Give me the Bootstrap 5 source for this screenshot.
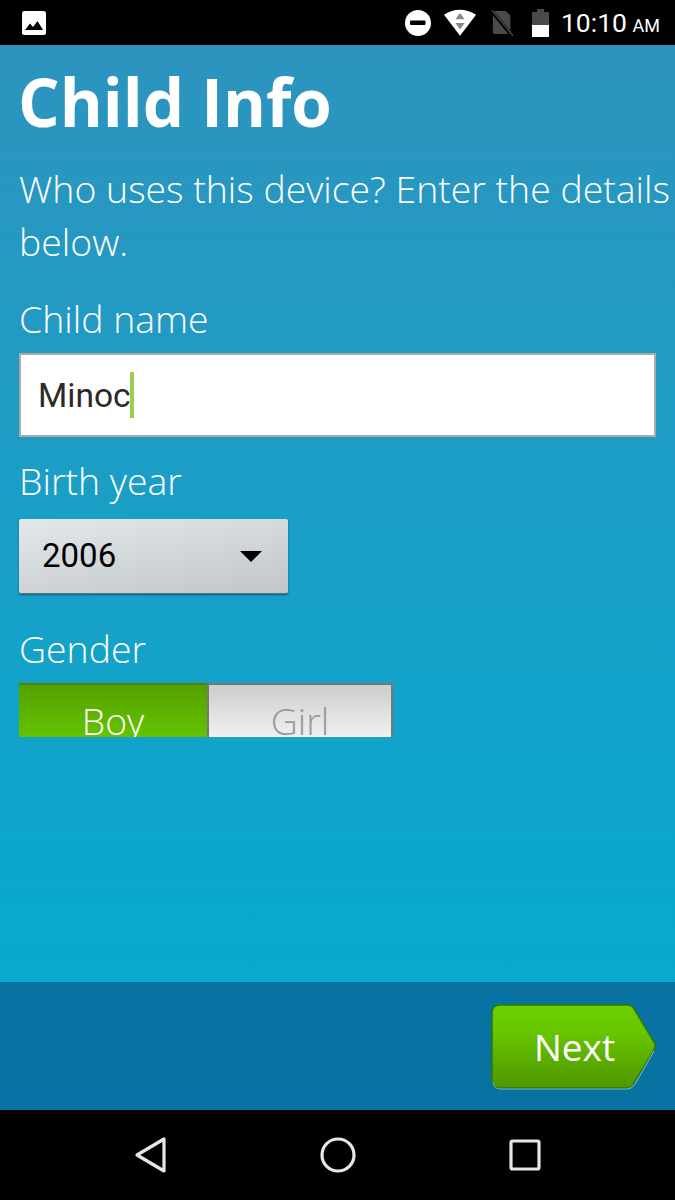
<!DOCTYPE html>
<html lang="en">
<head>
    <meta charset="UTF-8">
    <meta name="viewport" content="width=device-width, initial-scale=1.0">
    <title>Child Info</title>
    <link rel="stylesheet" href="https://cdn.jsdelivr.net/npm/bootstrap@5.3.0/dist/css/bootstrap.min.css">
    <style>
        html, body { height: 1200px; overflow: hidden; background: #000; }
        .screen { height: 1200px; font-family: "Open Sans", sans-serif; }

        /* Android status bar */
        .status-bar { height: 45px; background: #000; color: #fff; padding: 0 15px 0 21px; font-family: Roboto, sans-serif; }
        .status-bar svg { display: block; }
        .status-time { font-size: 26.5px; line-height: 45px; padding-top: 3px; margin-left: 10px; white-space: nowrap; }
        .status-time span { font-size: 18px; margin-left: -1px; }

        /* Form area */
        .form-area { height: 937px; padding: 19px 0 0 20px; background: linear-gradient(180deg, #2d94be 0%, #07a9cf 100%); color: #fff; overflow: hidden; }
        .page-title { font-size: 65.5px; font-weight: 700; line-height: 76px; margin: 0 0 0 -2px; }
        .intro { font-size: 37.4px; font-weight: 300; line-height: 52.5px; margin: 23px 0 0 -1px; white-space: nowrap; }
        .field-label { font-size: 37.4px; font-weight: 300; line-height: 50px; margin: 0 0 0 -1px; display: block; }
        .name-box { width: 637px; height: 84px; margin-left: -1px; margin-top: 9px; background: #fff; border: 2px solid #aaa; padding: 3px 0 0 17px; display: flex; align-items: center; font-family: Roboto, sans-serif; font-size: 33.5px; color: #2a2a2a; }
        .caret-bar { display: inline-block; width: 4px; height: 46px; background: #97cf4e; margin: -3px 0 0 -1px; }
        .year-btn { width: 269px; height: 75px; margin-left: -1px; margin-top: 13px; padding: 0 26px 0 23px; background: linear-gradient(170deg, #e3e8ea 0%, #c0c6c9 100%); border: 0; border-bottom: 1px solid #5d6f78; border-radius: 2px; box-shadow: 0 1px 2px rgba(0,50,70,.6); font-family: Roboto, sans-serif; font-size: 33px; color: #000; }
        .year-arrow { width: 0; height: 0; border-left: 11px solid transparent; border-right: 11px solid transparent; border-top: 11px solid #000; }
        .gender-clip { height: 54px; overflow: hidden; margin-left: -1px; margin-top: 9px; }
        .gender-opt { height: 80px; font-size: 37.4px; font-weight: 300; line-height: 72px; text-align: center; }
        .gender-boy { width: 188px; color: #fff; background: linear-gradient(180deg, #569f00 0%, #66c800 75%); border-top: 2px solid #4b8a00; }
        .gender-girl { width: 186px; color: #999; background: linear-gradient(180deg, #cdcdcd 0%, #f2f2f2 70%); border: 2px solid #777; border-bottom: 0; }

        /* Bottom bar with Next */
        .action-bar { height: 128px; background: #0872a3; padding: 21px 19px 0 0; }
        .next-btn { position: relative; width: 165px; height: 88px; padding: 0 0 0 2px; border: 0; background: none; color: #fff; font-family: "Open Sans", sans-serif; font-size: 37px; line-height: 86px; }
        .next-btn svg { position: absolute; left: 0; top: 0; }
        .next-btn span { position: relative; }

        /* Android nav bar */
        .nav-keys { height: 90px; background: #000; }
        .nav-keys svg { position: absolute; }
    </style>
</head>
<body>
    <div class="screen d-flex flex-column">
        <div class="status-bar d-flex align-items-center">
            <!-- picture notification -->
            <svg width="26" height="26" viewBox="0 0 26 26">
                <rect x="1" y="1" width="24" height="24" rx="2.5" fill="#fff"/>
                <path d="M4 20 L9 13.5 L12 17 L16.5 11 L22 20 Z" fill="#000"/>
            </svg>
            <div class="ms-auto d-flex align-items-center">
                <svg width="28" height="28" viewBox="0 0 28 28" style="margin-right:12px">
                    <circle cx="14" cy="14" r="13" fill="#fff"/>
                    <rect x="6" y="11.5" width="15.5" height="4.5" rx="1" fill="#000"/>
                </svg>
                <svg width="33" height="28" viewBox="0 0 36 30" style="margin-right:14px">
                    <path d="M0 6 Q17 -5 35 6 L17.5 29 Z" fill="#fff"/>
                    <path d="M17.5 4 L22.5 11 H12.5 Z" fill="#888"/>
                    <path d="M17.5 22 L22.5 15 H12.5 Z" fill="#888"/>
                </svg>
                <svg width="24" height="30" viewBox="0 0 26 30" style="margin-right:16px">
                    <path d="M2 4 Q2 2 4 2 H16 L21 7 V25 Q21 27 19 27 H4 Q2 27 2 25 Z" fill="#4a4a4a"/>
                    <path d="M0 1 L23 29" stroke="#000" stroke-width="4"/>
                    <path d="M1 1 L24 29" stroke="#4a4a4a" stroke-width="1.5"/>
                </svg>
                <svg width="20" height="30" viewBox="0 0 20 30">
                    <path d="M6 1 H13 V4 H18 V29 H1 V4 H6 Z" fill="#4a4a4a"/>
                    <rect x="1" y="17" width="17" height="12" fill="#fff"/>
                </svg>
                <div class="status-time">10:10 <span>AM</span></div>
            </div>
        </div>

        <div class="form-area">
            <h1 class="page-title">Child Info</h1>
            <p class="intro">Who uses this device? Enter the details<br>below.</p>
            <label class="field-label" style="margin-top:26px">Child name</label>
            <div class="name-box">Minoc<span class="caret-bar"></span></div>
            <label class="field-label" style="margin-top:19px">Birth year</label>
            <button type="button" class="year-btn d-flex align-items-center justify-content-between">2006<span class="year-arrow"></span></button>
            <label class="field-label" style="margin-top:30px">Gender</label>
            <div class="gender-clip d-flex">
                <div class="gender-opt gender-boy">Boy</div>
                <div class="gender-opt gender-girl">Girl</div>
            </div>
        </div>

        <div class="action-bar d-flex justify-content-end align-items-start">
            <button type="button" class="next-btn">
                <svg width="165" height="88" viewBox="0 0 165 88">
                    <defs>
                        <linearGradient id="nextFill" x1="0" y1="0" x2="0" y2="1">
                            <stop offset="0" stop-color="#6dd000"/>
                            <stop offset="0.35" stop-color="#66c400"/>
                            <stop offset="1" stop-color="#4f9600"/>
                        </linearGradient>
                    </defs>
                    <path d="M9 2 H136 Q141 2 143 6 L163 39 Q165 43 163 47 L143 80 Q141 85 136 85 H9 Q1 85 1 77 V10 Q1 2 9 2 Z" fill="url(#nextFill)" stroke="#2f7a00" stroke-width="1.5"/>
                    <path d="M136 86 Q141 86 144 81 L163 48" fill="none" stroke="#7fc0d8" stroke-width="1"/>
                    <path d="M2 79 Q3 86 9 86 H136" fill="none" stroke="#6fb4d0" stroke-width="1"/>
                </svg>
                <span>Next</span>
            </button>
        </div>

        <div class="nav-keys position-relative">
            <svg style="left:134px;top:26px" width="34" height="38" viewBox="0 0 34 38">
                <path d="M3 19 L30 3 V35 Z" fill="none" stroke="#e6e6e6" stroke-width="3.2" stroke-linejoin="round"/>
            </svg>
            <svg style="left:319px;top:26px" width="38" height="38" viewBox="0 0 38 38">
                <circle cx="19" cy="19" r="16" fill="none" stroke="#e6e6e6" stroke-width="3.2"/>
            </svg>
            <svg style="left:508px;top:28px" width="34" height="34" viewBox="0 0 34 34">
                <rect x="3" y="3" width="28" height="28" rx="1.5" fill="none" stroke="#e6e6e6" stroke-width="3.2"/>
            </svg>
        </div>
    </div>
    <script src="https://cdn.jsdelivr.net/npm/bootstrap@5.3.0/dist/js/bootstrap.bundle.min.js"></script>
</body>
</html>
